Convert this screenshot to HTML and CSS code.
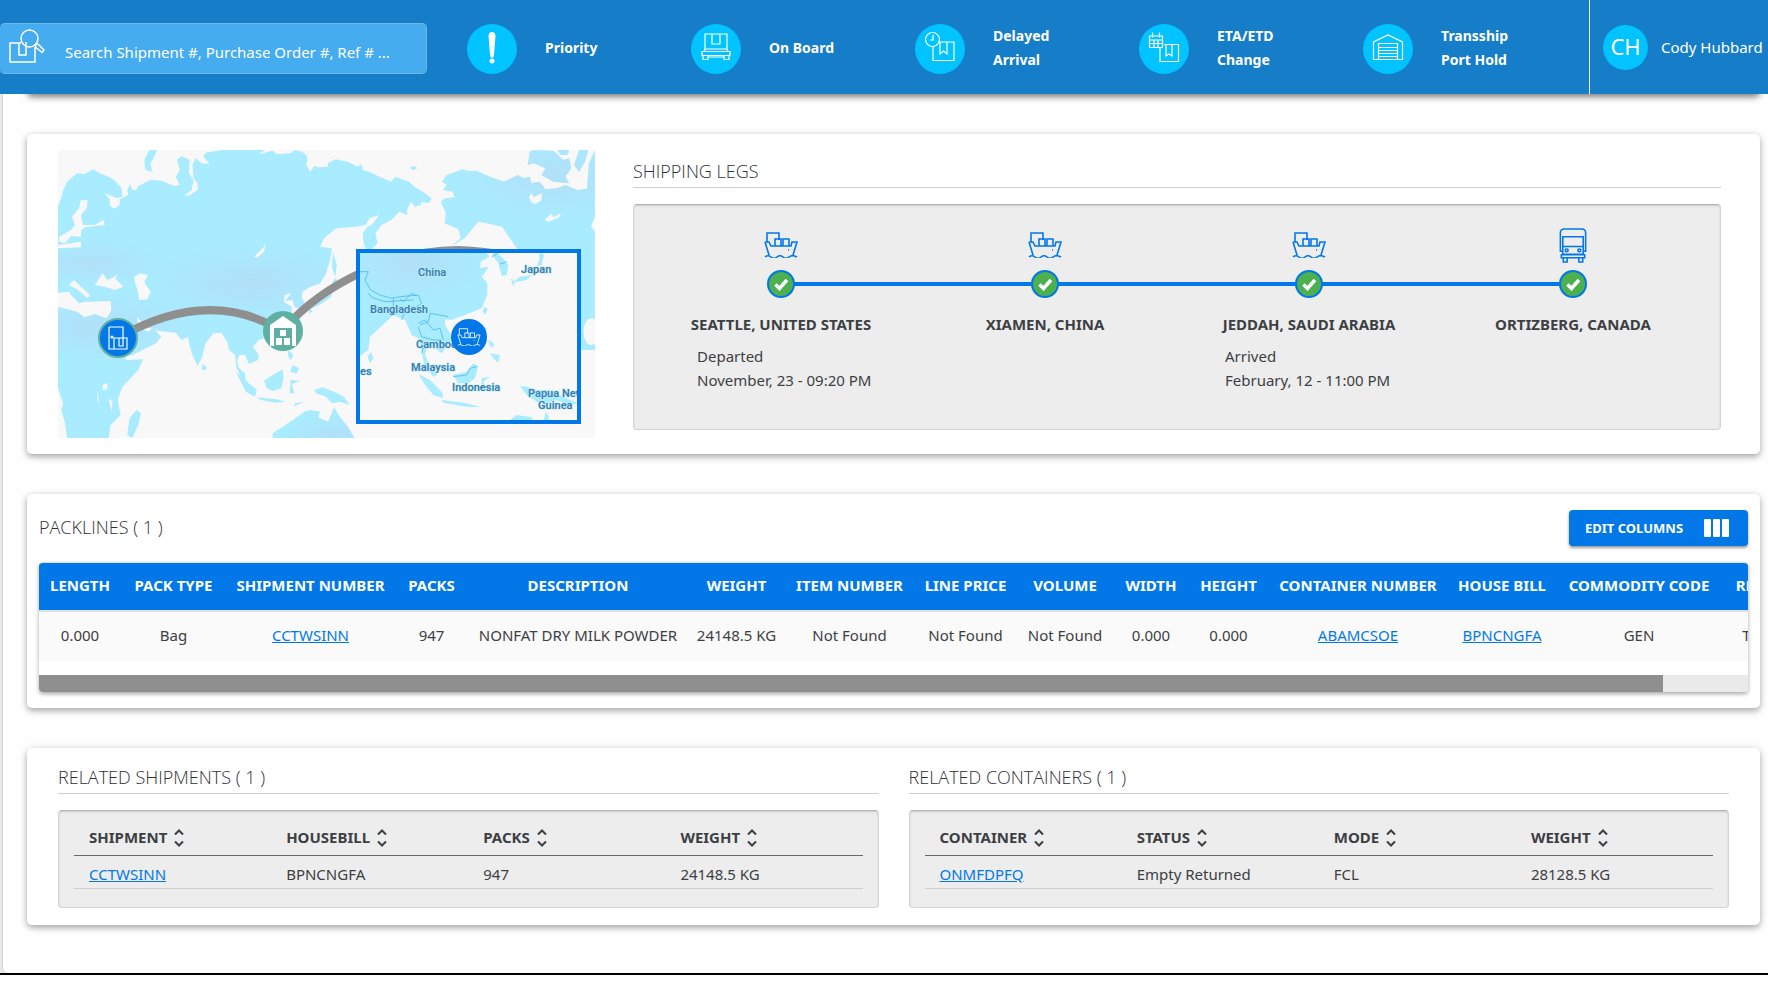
FILE: index.html
```html
<!DOCTYPE html>
<html lang="en">
<head>
<meta charset="utf-8">
<meta name="viewport" content="width=device-width, initial-scale=1">
<title>Shipment details</title>
<link rel="stylesheet" href="styles.css">
</head>
<body>
<svg class="sprite" aria-hidden="true">
  <symbol id="ship" viewBox="0 0 34 26">
    <path d="M3 9.500V1h12v7M1 10h4l2 4h20l1-4h5l-4 13M1 10l4 13M11 14V7h6v7M19 14V7h6v7M1 25q3-2.500 6 0t6 0t6 0t6 0t8 0M24 18h1"/>
  </symbol>
  <symbol id="truck" viewBox="0 0 28 36">
    <path d="M3.500 24H1V5q0-4 4-4h18q4 0 4 4v19h-2.500M3.500 27V9h21v18zM3.500 19h21M2 27.500h24v3H2zM4 31v4h4v-4M20 31v4h4v-4"/>
    <circle cx="7.500" cy="23" r="1.500"/><circle cx="20.500" cy="23" r="1.500"/>
  </symbol>
  <symbol id="sort" viewBox="0 0 10 18">
    <path d="M1 5.500l4-4 4 4M1 12.500l4 4 4-4"/>
  </symbol>
  <symbol id="check" viewBox="0 0 28 28">
    <circle cx="14" cy="14" r="13"/><path d="M8.500 14.500l4 4 7.500-8.500"/>
  </symbol>
</svg>

<header class="topbar">
  <form class="search" role="search">
    <svg class="search-icon" viewBox="0 0 36 34" aria-hidden="true">
      <path d="M12 14H1v19h25V18M10 14v12h7V13"/><circle cx="20.500" cy="9.500" r="8.500"/><path d="M26 16l3-1 6 6-2 2.500-6-5z"/>
    </svg>
    <input class="search-input" type="search" aria-label="Search shipments" placeholder="Search Shipment #, Purchase Order #, Ref # ...">
  </form>
  <nav class="statuses" aria-label="Shipment status">
    <a class="status" href="#priority">
      <svg class="status-icon" viewBox="0 0 50 50" aria-hidden="true"><path class="solid" d="M21.500 12q0-4 3.500-4t3.500 4L27 31q-.3 3-2 3t-2-3z"/><circle class="solid" cx="25" cy="37" r="2.500"/></svg>
      <span class="status-label">Priority</span>
    </a>
    <a class="status" href="#on-board">
      <svg class="status-icon" viewBox="0 0 50 50" aria-hidden="true"><path d="M14 10h22v15H14zM21 10v10h8V10M11 27.500h28v4H11zM12 31.500h5v4h-5zM33 31.500h5v4h-5zM17 33h16M14 25l-1 2.500M36 25l1 2.500"/></svg>
      <span class="status-label">On Board</span>
    </a>
    <a class="status" href="#delayed">
      <svg class="status-icon" viewBox="0 0 50 50" aria-hidden="true"><circle cx="17.500" cy="15.500" r="7"/><path d="M18 11v5h-3M23.500 18H39v18.500H18V23M25 18v12l3.500-3 3.500 3V18"/></svg>
      <span class="status-label">Delayed Arrival</span>
    </a>
    <a class="status" href="#eta">
      <svg class="status-icon" viewBox="0 0 50 50" aria-hidden="true"><path d="M10.500 12h13v11.500h-13zM10.500 16h13M10.500 19.500h13M15 16v7.500M19 16v7.500M13.500 8.500v5M20.500 8.500v5M25 20.500h14.500V37.500H21V24M27 20.500V32l3-2 3 2V20.500"/></svg>
      <span class="status-label">ETA/ETD Change</span>
    </a>
    <a class="status" href="#port-hold">
      <svg class="status-icon" viewBox="0 0 50 50" aria-hidden="true"><path d="M15.500 35.500h-5V18L25 11l14.500 7v17.500h-5M15.500 19.500h19v16h-19zM15.500 23.500h19M15.500 26.500h19M15.500 29.500h19M15.500 32.500h19"/></svg>
      <span class="status-label">Transship Port Hold</span>
    </a>
  </nav>
  <a class="user" href="#profile"><span class="avatar">CH</span><span class="user-name">Cody Hubbard</span></a>
</header>

<div class="shell">
<main class="page">
  <div class="previous-card"></div>

  <section class="card legs-card">
    <svg class="map" viewBox="0 0 537 288" role="img" aria-label="Route map">
      <defs>
        <clipPath id="map-clip"><rect width="537" height="288"/></clipPath>
        <clipPath id="inset-clip"><rect x="302" y="103" width="217" height="167"/></clipPath>
        <radialGradient id="haze"><stop offset="0" stop-color="#b2e0f9"/><stop offset="1" stop-color="#b2e0f9" stop-opacity="0"/></radialGradient>
        <clipPath id="land-clip"><use href="#land"/></clipPath>
        <g id="house"><path class="house" d="M-13 15V-6L0-15 13-6V15H9V-3H-9V15z"/><path class="house" d="M-3-1h6v6h-6zM-7 7h6v7h-6zM1 7h6v7H1z"/></g>
      </defs>
      <g clip-path="url(#map-clip)">
        <rect class="sea" width="537" height="288"/>
        <g transform="scale(.3954 .3333) translate(-147 -120)">
          <path id="land" class="land" d="M147 290L155 265 160 240 170 215 180 205 195 190 215 192 235 178 250 188 275 200 290 210 308 235 310 260 295 264 265 250 278 268 278 288 290 296 303 285 303 268 325 255 322 240 330 223 335 240 345 240 350 228 380 210 410 212 440 228 455 225 445 200 455 180 448 150 460 138 480 150 478 190 490 210 485 240 466 258 480 256 500 240 500 220 490 205 487 165 495 145 510 160 530 162 515 140 520 128 560 120 670 120 655 133 690 122 700 133 735 130 745 120 765 125 778 140 775 165 785 185 795 168 805 172 830 170 830 158 850 148 880 155 905 170 915 163 918 180 940 188 960 200 990 215 1000 200 1022 210 1035 215 1050 232 1075 250 1092 265 1085 280 1065 275 1065 285 1050 290 1040 275 1030 298 1030 315 1010 305 990 330 965 345 950 370 955 400 930 430 920 400 918 370 930 350 940 345 960 315 935 325 925 345 900 350 850 355 820 385 810 410 840 415 835 450 825 490 810 520 785 530 765 545 763 560 775 590 762 600 745 590 740 570 722 572 738 548 720 555 718 575 738 590 738 610 730 640 715 665 690 690 668 685 655 690 640 710 655 735 653 750 630 762 620 735 605 735 600 755 605 775 620 790 622 815 610 805 598 770 595 735 580 720 575 695 560 668 540 670 520 700 512 740 500 768 485 730 475 680 460 690 445 668 400 662 370 650 347 620 350 650 375 665 388 655 408 680 395 700 330 738 310 715 290 680 320 750 362 748 350 780 310 830 298 870 305 915 280 945 275 984 170 984 165 940 155 900 160 880 147 835zM378 120L397 120 388 148 380 160 386 185 368 180 365 150zM1118 215L1130 195 1170 178 1185 183 1205 182 1240 200 1275 215 1310 195 1325 205 1340 200 1345 220 1365 215 1380 238 1410 235 1430 225 1460 240 1485 236 1490 160 1505 120V320L1495 350 1505 365V720H1469V440H1330L1305 412 1290 385 1270 350 1230 340 1210 335 1175 385 1140 410 1165 385 1160 358 1125 340 1128 310 1115 275 1125 265 1150 262 1145 245 1120 240 1130 225zM1340 125L1350 120 1400 122 1425 150 1440 145 1445 175 1430 200 1440 220 1400 215 1370 195 1380 175 1350 160 1335 165zM1410 120L1440 120 1436 135 1418 135zM1465 120H1488L1480 155 1465 185 1452 165zM1037 173L1047 168 1056 175 1045 181zM842 425L852 465 848 500 840 470zM848 505L862 520 845 535 840 520zM842 540L838 560 815 580 792 595 785 585 815 570zM785 590L790 605 780 610zM512 762L523 770 520 780 510 780zM345 900L357 910 350 945 335 984 322 975 328 925zM597 785L620 810 650 840 645 860 622 845zM650 862L700 868 722 875 700 878 660 870zM668 812L690 795 715 778 718 800 712 835 690 843 675 835zM730 720L742 735 735 750 728 735zM740 765L757 775 750 790 735 785zM735 810L760 812 738 822 745 850 733 850zM795 840L815 832 845 845 870 860 885 885 860 875 840 880 825 860 800 850zM690 970L735 935 770 905 785 900 810 905 805 922 830 935 845 892 860 920 880 950 897 984H690zM745 880L770 875 745 888z"/>
          <g clip-path="url(#land-clip)">
            <ellipse cx="640" cy="520" rx="270" ry="110" fill="url(#haze)"/>
            <ellipse cx="260" cy="650" rx="230" ry="100" fill="url(#haze)"/>
            <ellipse cx="240" cy="460" rx="160" ry="70" fill="url(#haze)"/>
            <ellipse cx="1400" cy="200" rx="230" ry="120" fill="url(#haze)"/>
            <ellipse cx="840" cy="984" rx="120" ry="70" fill="url(#haze)"/>
          </g>
          <path class="sea" d="M205 270L222 270 220 295 205 315 210 345 240 345 262 330 265 345 215 352 205 362 205 380 180 378 165 400 150 395 150 380 180 360 190 345 182 320 200 295zM147 405L205 395 205 412 147 415zM147 548L175 545 180 555 200 580 215 575 235 575 280 573 282 600 270 625 240 612 215 622 195 605 147 590zM187 510L205 530 228 555 222 565 195 538 175 525zM240 525L260 490 272 510 290 500 300 490 292 505 312 530 290 540 265 530zM340 500L355 490 375 495 365 515 375 535 382 545 372 568 352 570 350 545 342 520zM643 440L665 415 673 400 668 425 650 443zM1338 262L1345 250 1350 262 1370 250 1370 270 1355 282 1345 278zM1378 330L1395 310 1400 322 1418 310 1415 322 1388 335zM260 825L272 818 272 838 260 840zM246 840L252 880 247 870zM275 865L285 875 283 905z"/>
          <ellipse class="sea" cx="1496" cy="665" rx="20" ry="40"/>
        </g>
        <path class="route" d="M60 188Q150 136 224 181C268 130 340 100 400 100Q428 101 450 106"/>
        <rect class="inset-frame" x="300" y="101" width="221" height="171"/>
        <g clip-path="url(#inset-clip)">
          <g transform="translate(292 90) scale(.3333)">
            <path class="land" d="M20 30H405L418 50 392 65 390 85 415 80 405 98 395 110 412 130 412 165 395 205 345 225 325 232 305 240 285 238 285 255 300 280 305 300 275 340 250 320 232 318 225 345 240 380 262 405 250 410 225 380 215 335 205 295 185 285 165 240 130 225 60 290 55 330 20 355zM430 35L455 50 475 75 470 105 455 108 445 70 430 50zM568 38L582 45 575 75 560 78 568 60zM490 125L510 110 545 105 530 120 500 125zM482 115L495 125 490 140zM405 200L413 208 405 225 398 212zM63 335L70 355 60 370 53 350zM205 402L240 420 275 455 280 475 250 465 225 435zM275 480L340 488 395 502 350 500 280 488zM308 405L350 395 370 370 385 378 375 415 355 430 325 430zM395 255L412 265 400 285zM415 300L432 310 428 325 418 315zM420 340L450 345 445 368 430 355zM510 438L530 440 560 450 600 450 640 470 685 490 660 495 620 480 590 490 560 485 530 465zM480 540L500 525 545 532 550 545H475zM588 515L597 530 595 545 580 545zM395 415L420 410 400 425 405 450 395 450z"/>
            <ellipse cx="190" cy="70" rx="210" ry="110" fill="url(#haze)"/>
            <path class="borders" d="M30 95L55 95 45 120 62 150 90 165 125 175 150 170 205 165 215 190 200 200M55 160L65 172 105 185 190 180M130 175L130 215M150 175L160 185 185 160 200 168M155 240L165 215M210 255L235 245 240 220 270 225 295 230M205 250L225 240 250 270 270 265 280 300M205 260L215 290 250 300 270 300M215 340L220 320M425 50L445 40M450 72L470 65M310 410L350 405 360 385 380 380"/>
          </g>
          <g class="labels">
            <text x="360" y="126">China</text><text x="463" y="123">Japan</text><text x="312" y="163">Bangladesh</text><text x="358" y="198">Cambodia</text><text x="353" y="221">Malaysia</text><text x="394" y="241">Indonesia</text><text x="302" y="225">es</text><text x="470" y="247">Papua New</text><text x="480" y="259">Guinea</text>
          </g>
        </g>
        <circle class="pin pin-door" cx="60" cy="188" r="19"/>
        <g class="pin-lines"><path d="M51 177h14v11M51 177v22h18V188H56v11M61 188v8h4v-8"/><circle cx="54" cy="187" r="1"/></g>
        <circle class="pin pin-port" cx="225" cy="181" r="20"/>
        <use href="#house" x="225" y="181"/>
        <circle class="pin pin-ship" cx="411" cy="187" r="18"/>
        <g class="pin-lines"><use href="#ship" x="399" y="178" width="24" height="18"/></g>
      </g>
    </svg>

    <div class="legs">
      <h2 class="section-title ruled">SHIPPING LEGS</h2>
      <ol class="panel leg-list">
        <li class="leg">
          <svg class="leg-icon"><use href="#ship"/></svg>
          <span class="track"><svg class="check"><use href="#check"/></svg></span>
          <h3 class="leg-name">SEATTLE, UNITED STATES</h3>
          <p class="leg-detail">Departed<br>November, 23 - 09:20 PM</p>
        </li>
        <li class="leg">
          <svg class="leg-icon"><use href="#ship"/></svg>
          <span class="track"><svg class="check"><use href="#check"/></svg></span>
          <h3 class="leg-name">XIAMEN, CHINA</h3>
        </li>
        <li class="leg">
          <svg class="leg-icon"><use href="#ship"/></svg>
          <span class="track"><svg class="check"><use href="#check"/></svg></span>
          <h3 class="leg-name">JEDDAH, SAUDI ARABIA</h3>
          <p class="leg-detail">Arrived<br>February, 12 - 11:00 PM</p>
        </li>
        <li class="leg">
          <svg class="leg-icon leg-icon-truck"><use href="#truck"/></svg>
          <span class="track"><svg class="check"><use href="#check"/></svg></span>
          <h3 class="leg-name">ORTIZBERG, CANADA</h3>
        </li>
      </ol>
    </div>
  </section>

  <section class="card packlines">
    <div class="packlines-head">
      <h2 class="section-title">PACKLINES ( 1 )</h2>
      <button class="edit-columns" type="button">EDIT COLUMNS
        <svg class="bars" viewBox="0 0 25 18" aria-hidden="true"><rect width="7" height="18" rx="1"/><rect x="9" width="7" height="18" rx="1"/><rect x="18" width="7" height="18" rx="1"/></svg>
      </button>
    </div>
    <div class="table-box">
      <div class="table-scroll">
        <table class="pack-table">
          <colgroup><col class="w82"><col class="w105"><col class="w169"><col class="w73"><col class="w220"><col class="w97"><col class="w129"><col class="w103"><col class="w96"><col class="w76"><col class="w79"><col class="w180"><col class="w108"><col class="w166"><col class="w119"></colgroup>
          <thead><tr><th>LENGTH</th><th>PACK TYPE</th><th>SHIPMENT NUMBER</th><th>PACKS</th><th>DESCRIPTION</th><th>WEIGHT</th><th>ITEM NUMBER</th><th>LINE PRICE</th><th>VOLUME</th><th>WIDTH</th><th>HEIGHT</th><th>CONTAINER NUMBER</th><th>HOUSE BILL</th><th>COMMODITY CODE</th><th>REFERENCES</th></tr></thead>
          <tbody><tr><td>0.000</td><td>Bag</td><td><a href="#shipment">CCTWSINN</a></td><td>947</td><td>NONFAT DRY MILK POWDER</td><td>24148.5 KG</td><td>Not Found</td><td>Not Found</td><td>Not Found</td><td>0.000</td><td>0.000</td><td><a href="#container">ABAMCSOE</a></td><td><a href="#housebill">BPNCNGFA</a></td><td>GEN</td><td>TBNCNGFA</td></tr></tbody>
        </table>
      </div>
      <div class="scrollbar" aria-hidden="true"><div class="scrollbar-thumb"></div></div>
    </div>
  </section>

  <section class="card related">
    <div>
      <h2 class="section-title ruled">RELATED SHIPMENTS ( 1 )</h2>
      <div class="panel related-panel">
        <table class="related-table">
          <thead><tr>
            <th><button type="button">SHIPMENT <svg class="sort"><use href="#sort"/></svg></button></th>
            <th><button type="button">HOUSEBILL <svg class="sort"><use href="#sort"/></svg></button></th>
            <th><button type="button">PACKS <svg class="sort"><use href="#sort"/></svg></button></th>
            <th><button type="button">WEIGHT <svg class="sort"><use href="#sort"/></svg></button></th>
          </tr></thead>
          <tbody><tr><td><a href="#shipment">CCTWSINN</a></td><td>BPNCNGFA</td><td>947</td><td>24148.5 KG</td></tr></tbody>
        </table>
      </div>
    </div>
    <div>
      <h2 class="section-title ruled">RELATED CONTAINERS ( 1 )</h2>
      <div class="panel related-panel">
        <table class="related-table">
          <thead><tr>
            <th><button type="button">CONTAINER <svg class="sort"><use href="#sort"/></svg></button></th>
            <th><button type="button">STATUS <svg class="sort"><use href="#sort"/></svg></button></th>
            <th><button type="button">MODE <svg class="sort"><use href="#sort"/></svg></button></th>
            <th><button type="button">WEIGHT <svg class="sort"><use href="#sort"/></svg></button></th>
          </tr></thead>
          <tbody><tr><td><a href="#container">ONMFDPFQ</a></td><td>Empty Returned</td><td>FCL</td><td>28128.5 KG</td></tr></tbody>
        </table>
      </div>
    </div>
  </section>
</main>
</div>
</body>
</html>
```
FILE: styles.css
```css
* { box-sizing: border-box; }

body {
  margin: 0;
  background: #fff;
  color: #3c3f43;
  font: 400 15px/24px "Noto Sans", "Open Sans", sans-serif;
}

h2, h3, p, ol { margin: 0; padding: 0; }
a { color: #0278e8; }
button { font: inherit; color: inherit; border: 0; }
svg { display: block; }
.sprite { position: absolute; width: 0; height: 0; }
.sprite path, .sprite circle { fill: none; stroke: inherit; stroke-width: inherit; }

/* Top bar */
.topbar {
  display: grid;
  grid-template-columns: 427px 1fr 179px;
  height: 94px;
  position: relative;
  z-index: 1;
  background: #167dc9;
  color: #fff;
}
.search {
  display: flex;
  align-items: center;
  gap: 20px;
  height: 51px;
  margin-top: 23px;
  padding: 0 8px 0 9px;
  border: 1px solid #72b8dc;
  border-left: 0;
  border-radius: 5px;
  background: #45acf0;
}
.search-icon {
  width: 36px;
  height: 34px;
  flex: none;
  margin-bottom: 6px;
  fill: none;
  stroke: #fff;
  stroke-width: 1.5;
}
.search-input {
  flex: 1;
  min-width: 0;
  padding: 6px 0 0;
  border: 0;
  background: none;
  color: #fff;
  font: inherit;
}
.search-input::placeholder { color: #fff; opacity: 1; }
.statuses {
  display: grid;
  grid-template-columns: repeat(5, 1fr);
  align-items: center;
  padding: 2px 2px 0 40px;
}
.status {
  display: flex;
  align-items: center;
  gap: 28px;
  color: #fff;
  font-size: 14px;
  font-weight: 700;
  text-decoration: none;
}
.status-icon {
  width: 50px;
  height: 50px;
  flex: none;
  margin-top: 2px;
  border-radius: 50%;
  background: #00c3ff;
  fill: none;
  stroke: #fff;
  stroke-width: 1.2;
}
.status-icon .solid { fill: #fff; stroke: none; }
.status-label { width: 80px; }
.user {
  display: flex;
  align-items: center;
  gap: 13px;
  padding-left: 13px;
  border-left: 1px solid #fff;
  color: #fff;
  text-decoration: none;
  white-space: nowrap;
}
.avatar {
  width: 45px;
  height: 45px;
  flex: none;
  border-radius: 50%;
  background: #00c3ff;
  font-size: 22px;
  line-height: 42px;
  text-align: center;
}

/* Page frame */
.shell {
  padding-left: 3px;
  border-bottom: 2px solid #000;
  background: #ececec;
}
.page {
  display: flow-root;
  padding: 0 8px 48px 24px;
  border-bottom-left-radius: 5px;
  background: #fefefe;
  box-shadow: 0 0 3px rgba(0, 0, 0, .25);
}
.card, .previous-card {
  border-radius: 5px;
  background: #fff;
  box-shadow: 0 3px 6px rgba(0, 0, 0, .3), 0 0 8px rgba(0, 0, 0, .08);
}
.previous-card { height: 20px; margin: -20px 0 40px; box-shadow: 0 3px 6px rgba(0, 0, 0, .5); }
.card + .card { margin-top: 40px; }
.section-title {
  color: #2e3135;
  font: 300 18px/24px "Open Sans", "Noto Sans", sans-serif;
}
.ruled { padding-bottom: 4px; border-bottom: 1px solid #cfcfcf; margin-bottom: 16px; }
.panel {
  border: 1px solid #d4d4d4;
  border-top: 1px solid #b4b4b4;
  border-radius: 4px;
  background: #ededed;
  box-shadow: inset 0 1px 2px rgba(0, 0, 0, .15);
}

/* Route map and legs */
.legs-card {
  display: grid;
  grid-template-columns: 537fr 1088fr;
  gap: 38px;
  padding: 16px 39px 16px 31px;
}
.map { width: 100%; }
.sea { fill: #f8f8f8; }
.land { fill: #a9ebff; }
.borders { fill: none; stroke: #36aee6; stroke-width: 2; }
.route { fill: none; stroke: #8f8f8f; stroke-width: 8; }
.inset-frame { fill: #f8f8f8; stroke: #0278e8; stroke-width: 4; }
.labels {
  fill: #367fae;
  stroke: #c5ecfb;
  stroke-width: 1;
  paint-order: stroke;
  font: 600 11px Roboto, sans-serif;
}
.pin-door { fill: #0278e8; stroke: #5fb0a2; stroke-width: 2; }
.pin-port { fill: #5fb0a2; }
.pin-ship { fill: #0278e8; }
.pin-lines { fill: none; stroke: #fff; stroke-width: 1.2; }
.house { fill: #fff; }
.legs { padding-top: 9px; }
.leg-list {
  display: grid;
  grid-template-columns: repeat(4, 1fr);
  height: 226px;
  padding: 23px 15px 0;
  list-style: none;
}
.leg { display: flex; flex-direction: column; align-items: center; }
.leg-icon {
  width: 34px;
  height: 26px;
  margin: 4px 0 7px;
  fill: none;
  stroke: #0278e8;
  stroke-width: 1.6;
}
.leg-icon-truck { width: 28px; height: 35px; margin: 0 0 2px; }
.track {
  display: grid;
  width: 100%;
  margin: 5px 0 14px;
  justify-items: center;
  background: linear-gradient(#0278e8, #0278e8) center / 100% 4px no-repeat;
}
.leg:first-child .track { background-position: right center; background-size: 50% 4px; }
.leg:last-child .track { background-position: left center; background-size: 50% 4px; }
.check { width: 28px; height: 28px; fill: #4caf50; stroke: #0278e8; stroke-width: 2; }
.sprite #check circle { fill: #4caf50; }
.sprite #check path { stroke: #fff; stroke-width: 3.5; }
.leg-name { font-size: 15px; line-height: 24px; font-weight: 700; }
.leg-detail { width: 100%; padding: 8px 0 0 48px; }

/* Packlines */
.packlines { padding: 16px 12px; }
.packlines-head { display: flex; align-items: center; justify-content: space-between; }
.packlines-head .section-title { padding-bottom: 2px; }
.edit-columns {
  display: flex;
  align-items: center;
  justify-content: space-between;
  width: 179px;
  height: 36px;
  padding: 0 19px 0 16px;
  border-radius: 4px;
  background: #0278e8;
  box-shadow: 0 2px 3px rgba(0, 0, 0, .4);
  color: #fff;
  font-size: 13px;
  font-weight: 700;
  line-height: 32px;
  white-space: nowrap;
}
.bars { width: 25px; height: 18px; fill: #fff; }
.table-box {
  margin-top: 16px;
  border-top: 1px solid #dee2e6;
  border-radius: 4px;
  overflow: hidden;
  box-shadow: 0 2px 4px rgba(0, 0, 0, .35);
}
.table-scroll { overflow-x: auto; scrollbar-width: none; }
.scrollbar { height: 17px; background: #eaeaea; }
.scrollbar-thumb { width: 95%; height: 100%; background: #8f8f8f; }
.pack-table {
  width: 1802px;
  margin-bottom: 14px;
  table-layout: fixed;
  border-collapse: collapse;
  text-align: center;
  white-space: nowrap;
}
.pack-table th { height: 48px; padding: 0 0 4px; background: #0278e8; color: #fff; font-weight: 700; }
.pack-table td { height: 50px; padding: 0 0 3px; border-top: 2px solid #dee2e6; background: #fafafa; }
.w82 { width: 82px; }
.w105 { width: 105px; }
.w169 { width: 169px; }
.w73 { width: 73px; }
.w220 { width: 220px; }
.w97 { width: 97px; }
.w129 { width: 129px; }
.w103 { width: 103px; }
.w96 { width: 96px; }
.w76 { width: 76px; }
.w79 { width: 79px; }
.w180 { width: 180px; }
.w108 { width: 108px; }
.w166 { width: 166px; }
.w119 { width: 119px; }

/* Related tables */
.related {
  display: grid;
  grid-template-columns: 1fr 1fr;
  gap: 30px;
  padding: 17px 31px;
}
.related-panel { padding: 12px 15px 18px; }
.related-table { width: 100%; table-layout: fixed; border-collapse: collapse; text-align: left; }
.related-table th { height: 32px; padding: 0 15px 4px; border-bottom: 1px solid #6a6a6a; }
.related-table th button {
  display: flex;
  align-items: center;
  gap: 7px;
  padding: 0;
  background: none;
  font-weight: 700;
}
.related-table td { height: 33px; padding: 6px 15px 2px; border-bottom: 1px solid #cfcfcf; }
.sort { width: 10px; height: 18px; margin-top: 2px; fill: none; stroke: #3c3f43; stroke-width: 2; }
```
